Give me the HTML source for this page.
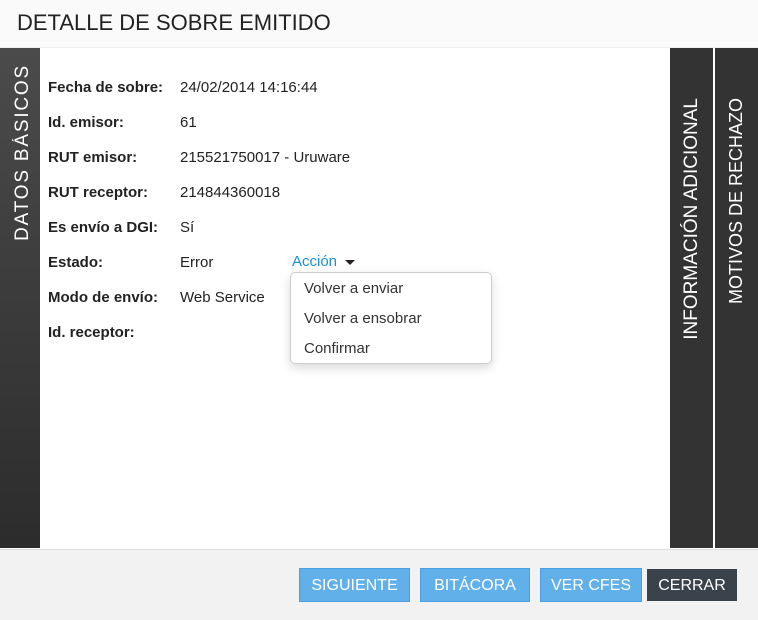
<!DOCTYPE html>
<html><head><meta charset="utf-8"><style>
*{margin:0;padding:0;box-sizing:border-box}
body{width:758px;height:620px;overflow:hidden;background:#fff;font-family:"Liberation Sans",sans-serif;color:#222;position:relative}
.hdr{position:absolute;left:0;top:0;width:758px;height:48px;background:#fafafa;border-bottom:1px solid #eee}
.hdr h1{position:absolute;left:17px;top:10px;font-weight:normal;font-size:22px;color:#222}
.lbar{position:absolute;left:0;top:48px;width:40px;height:500px;background:linear-gradient(#4b4b4b,#2c2c2c)}
.rt{position:absolute;top:48px;height:500px;width:43px;background:#333}
.v{position:absolute;writing-mode:vertical-rl;transform:rotate(180deg);color:#fff;font-size:19px;white-space:nowrap}
.row{position:absolute;left:48px;font-size:15px;height:20px;line-height:20px}
.row b{position:absolute;left:0;white-space:nowrap}
.row span{position:absolute;left:132px;white-space:nowrap}
.acc{position:absolute;left:292px;top:252px;color:#1a8fd8;font-size:15px;line-height:20px}
.caret{display:inline-block;width:0;height:0;border-left:5px solid transparent;border-right:5px solid transparent;border-top:5px solid #222;margin-left:8px;vertical-align:middle}
.dd{position:absolute;left:290px;top:272px;width:202px;height:92px;border:1px solid #ccc;border-radius:5px;background:#fff;box-shadow:0 4px 10px rgba(0,0,0,.15)}
.dd div{position:absolute;left:13px;font-size:15px;color:#333;line-height:20px}
.ftr{position:absolute;left:0;top:549px;width:758px;height:71px;background:#f2f2f2;border-top:1px solid #ddd}
.btn{position:absolute;top:568px;height:34px;background:#62b0ea;border:1px solid #4a9fe0;color:#fff;font-size:16px;text-align:center;line-height:33px}
</style></head><body>
<div class="hdr"><h1>DETALLE DE SOBRE EMITIDO</h1></div>
<div class="lbar"><div class="v" style="left:12px;top:16px;letter-spacing:1.8px">DATOS BÁSICOS</div></div>
<div class="rt" style="left:670px"><div class="v" style="left:11px;top:50px">INFORMACIÓN ADICIONAL</div></div>
<div class="rt" style="left:715px"><div class="v" style="left:11px;top:50px;font-size:18px">MOTIVOS DE RECHAZO</div></div>
<div class="row" style="top:78px"><b>Fecha de sobre:</b><span>24/02/2014 14:16:44</span></div>
<div class="row" style="top:113px"><b>Id. emisor:</b><span>61</span></div>
<div class="row" style="top:148px"><b>RUT emisor:</b><span>215521750017 - Uruware</span></div>
<div class="row" style="top:183px"><b>RUT receptor:</b><span>214844360018</span></div>
<div class="row" style="top:218px"><b>Es envío a DGI:</b><span>Sí</span></div>
<div class="row" style="top:253px"><b>Estado:</b><span>Error</span></div>
<div class="row" style="top:288px"><b>Modo de envío:</b><span>Web Service</span></div>
<div class="row" style="top:323px"><b>Id. receptor:</b></div>
<div class="acc">Acción<span class="caret"></span></div>
<div class="dd"><div style="top:6px">Volver a enviar</div><div style="top:36px">Volver a ensobrar</div><div style="top:66px">Confirmar</div></div>
<div class="ftr"></div>
<div class="btn" style="left:299px;width:111px">SIGUIENTE</div>
<div class="btn" style="left:420px;width:110px">BITÁCORA</div>
<div class="btn" style="left:540px;width:102px">VER CFES</div>
<div class="btn" style="left:647px;width:90px;top:569px;height:32px;line-height:31px;background:#3a424c;border-color:#3a424c">CERRAR</div>
</body></html>
